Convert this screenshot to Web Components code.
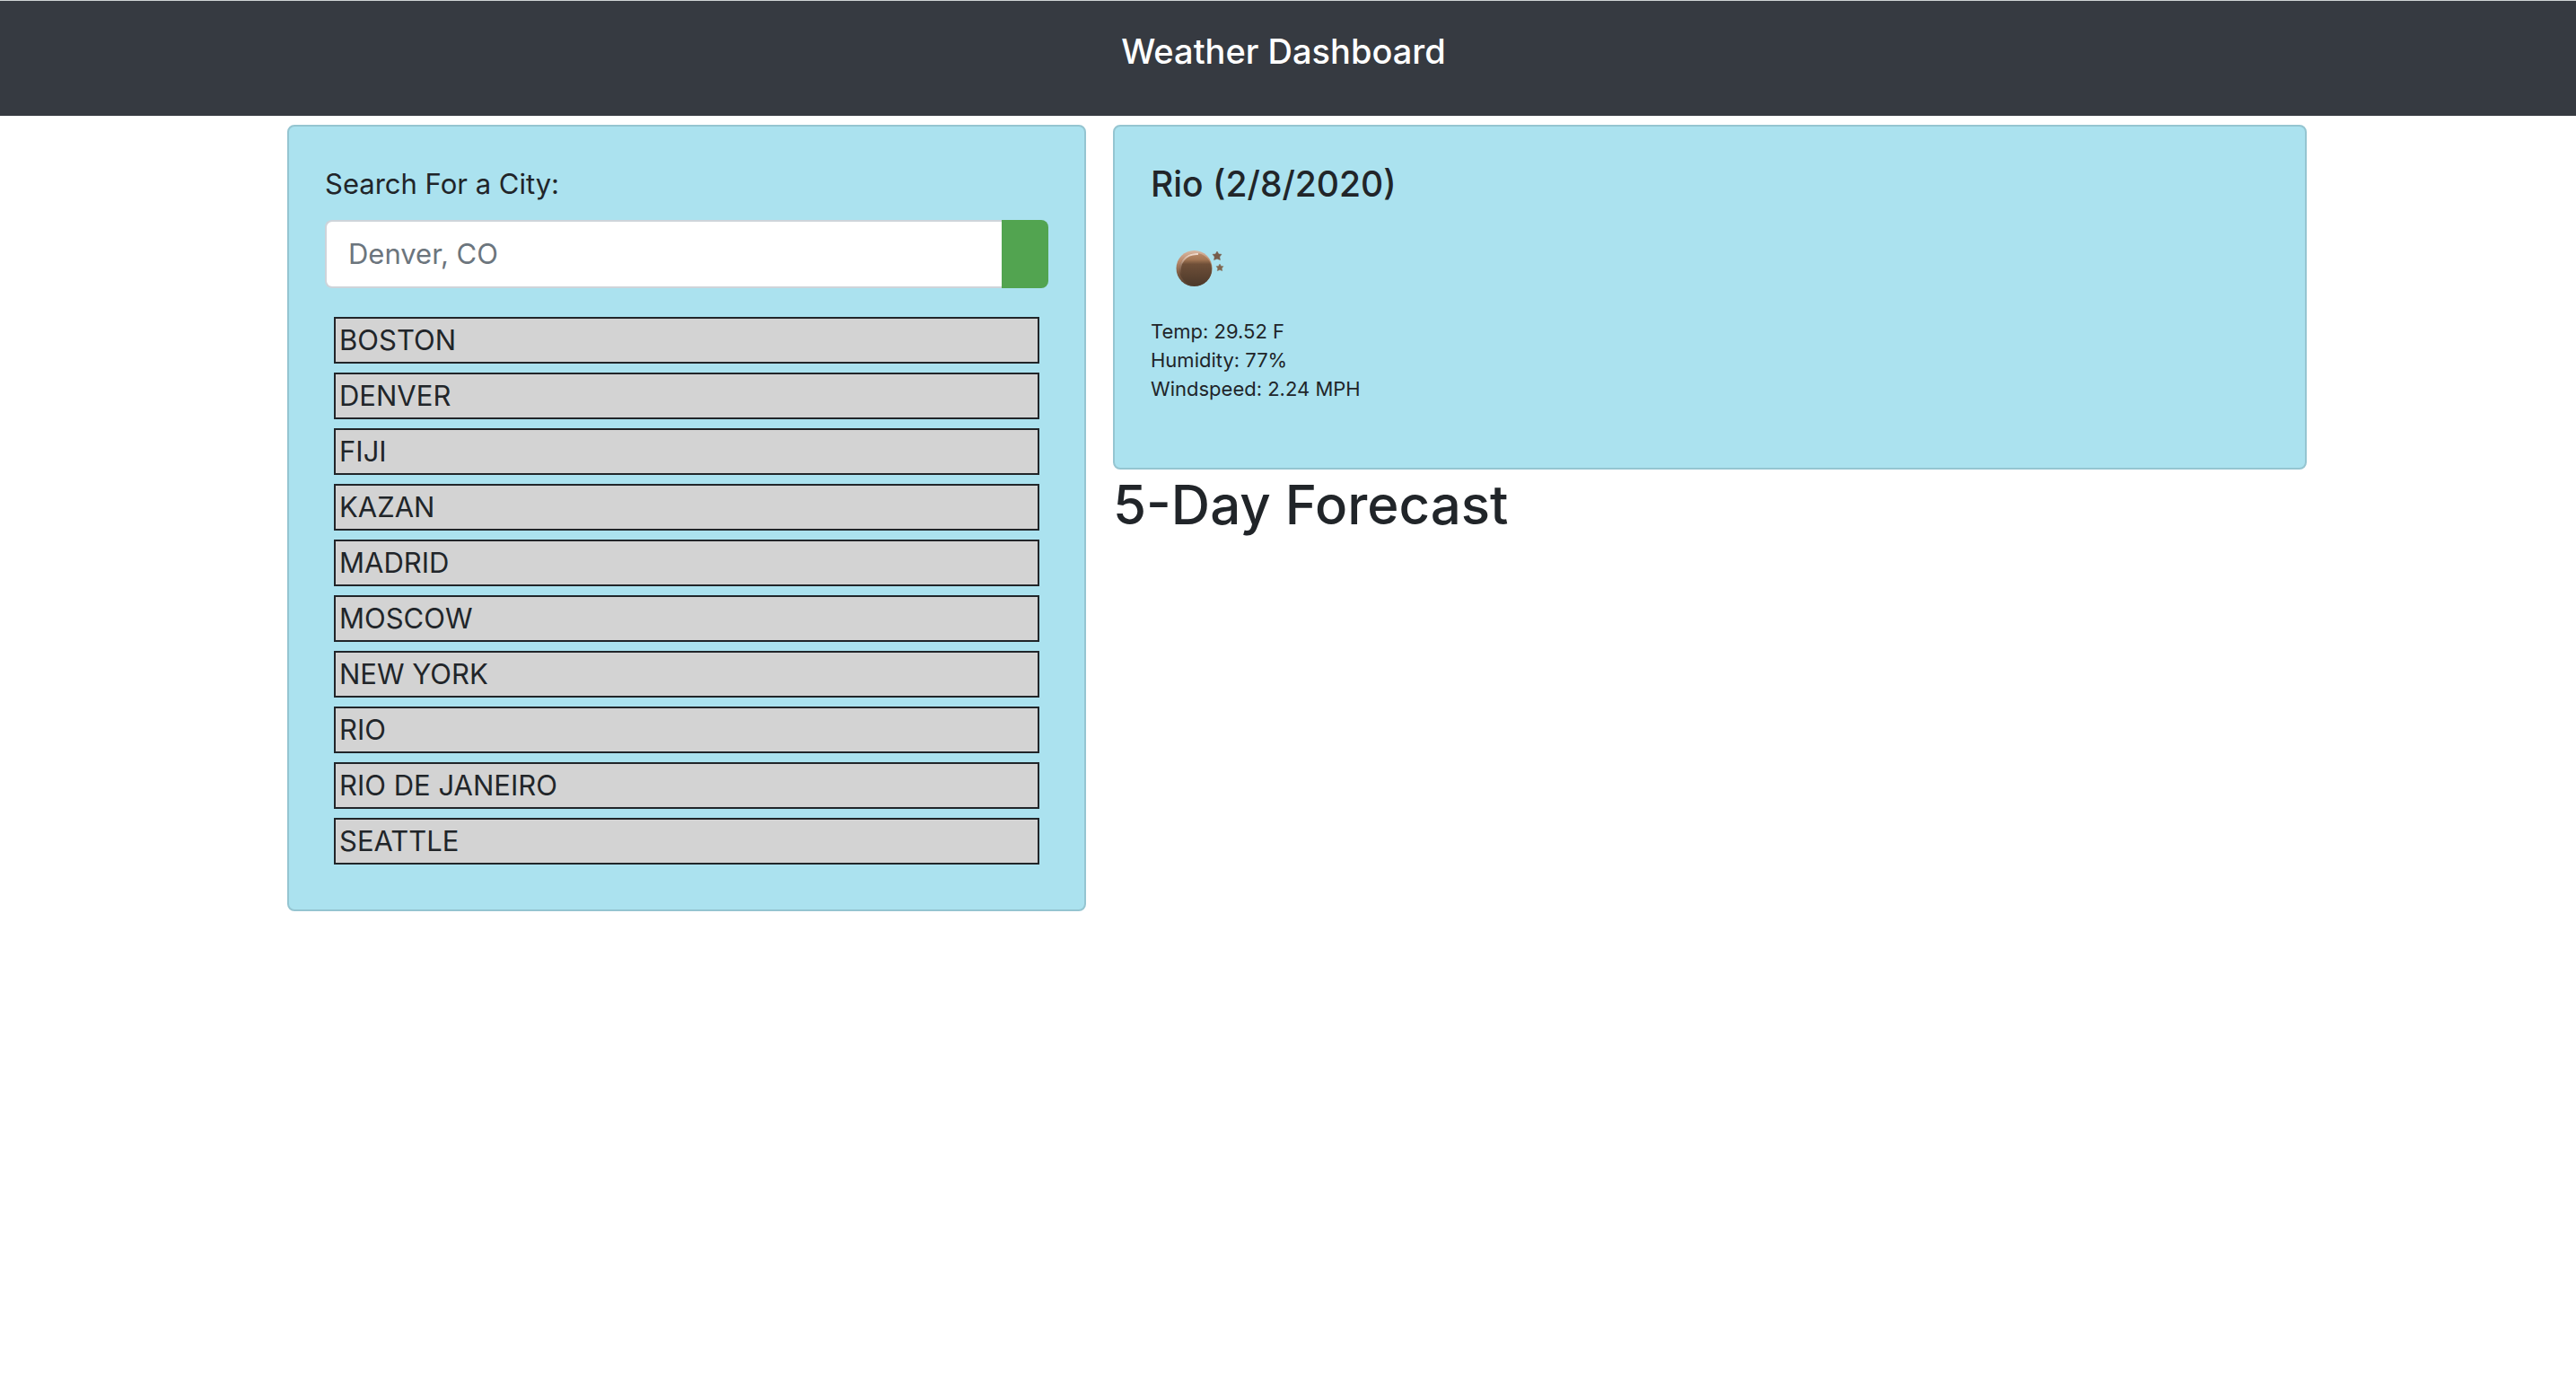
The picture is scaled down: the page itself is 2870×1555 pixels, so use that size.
<!DOCTYPE html>
<html lang="en">
<head>
<meta charset="utf-8">
<title>Weather Dashboard</title>
<style>
  html { --ink: #212529; --card: #abe2ef; --card-line: #95c5d1; --body-size: 31px; --title-size: 38px; --city-size: 39px; --small-size: 22px; }
  body { margin: 0; background: #fff; color: var(--ink); font: 400 var(--body-size)/48px Inter, "Liberation Sans", sans-serif; }
</style>
</head>
<body>
<weather-app></weather-app>
<script>
const shadow = (el, html) => {
  el.attachShadow({ mode: "open" }).innerHTML = "<style>*{box-sizing:border-box}:host{display:block;box-sizing:border-box}</style>" + html;
};

customElements.define("page-header", class extends HTMLElement {
  constructor() {
    super();
    shadow(this, `
      <style>
        :host { background: #363a41; border-top: 1px solid #cfd3d5; color: #fff; padding: 32px 10px 48px 0; text-align: center; }
        h1 { margin: 0; font-size: var(--title-size); font-weight: 500; line-height: 48px; }
      </style>
      <h1><slot></slot></h1>`);
  }
});

customElements.define("info-card", class extends HTMLElement {
  constructor() {
    super();
    shadow(this, `
      <style>
        :host { background: var(--card); border: 2px solid var(--card-line); border-radius: 8px; padding: 40px; }
      </style>
      <slot></slot>`);
  }
});

customElements.define("city-search", class extends HTMLElement {
  constructor() {
    super();
    shadow(this, `
      <style>
        form { margin: 0; }
        label { display: block; margin-bottom: 16px; }
        .group { display: flex; height: 76px; }
        input { flex: 1; min-width: 0; padding: 12px 24px; font: inherit; color: #495057; background: #fff;
          border: 2px solid #ced4da; border-right: 0; border-radius: 8px 0 0 8px; outline: 0; }
        input::placeholder { color: #6c757d; opacity: 1; }
        button { width: 52px; padding: 0; border: 0; border-radius: 0 8px 8px 0; background: #52a450; cursor: pointer; }
      </style>
      <form>
        <label for="city">Search For a City:</label>
        <div class="group"><input id="city" type="text" placeholder="Denver, CO"><button type="button"></button></div>
      </form>`);
  }
});

customElements.define("city-item", class extends HTMLElement {
  constructor() {
    super();
    shadow(this, `
      <style>
        button { display: block; width: 100%; padding: 0 4px; font: inherit; color: inherit; text-align: left;
          background: #d3d3d3; border: 2px solid var(--ink); border-radius: 0; cursor: pointer; }
      </style>
      <button type="button"><slot></slot></button>`);
  }
});

customElements.define("city-list", class extends HTMLElement {
  constructor() {
    super();
    const cities = ["BOSTON", "DENVER", "FIJI", "KAZAN", "MADRID", "MOSCOW", "NEW YORK", "RIO", "RIO DE JANEIRO", "SEATTLE"];
    shadow(this, `
      <style>
        ul { list-style: none; display: flex; flex-direction: column; gap: 10px; margin: 32px 10px 10px; padding: 0; }
      </style>
      <ul>${cities.map(c => `<li><city-item>${c}</city-item></li>`).join("")}</ul>`);
  }
});

customElements.define("night-icon", class extends HTMLElement {
  constructor() {
    super();
    shadow(this, `
      <style>:host { width: 100px; height: 100px; } svg { display: block; }</style>
      <svg width="100" height="100" viewBox="0 0 100 100" aria-hidden="true">
        <defs>
          <linearGradient id="rim" x1="0" y1="0" x2="0" y2="1">
            <stop offset="0" stop-color="#d9b8a2"/><stop offset=".3" stop-color="#b98a6c"/>
            <stop offset=".65" stop-color="#7a5a42"/><stop offset="1" stop-color="#4f3b2c"/>
          </linearGradient>
          <linearGradient id="disc" x1="0" y1="0" x2="0" y2="1">
            <stop offset="0" stop-color="#b98a69"/><stop offset=".2" stop-color="#a37653"/>
            <stop offset=".34" stop-color="#6f4f38"/><stop offset="1" stop-color="#4c392a"/>
          </linearGradient>
          <linearGradient id="shine" x1="0" y1="0" x2="0" y2="1">
            <stop offset="0" stop-color="#efd9cb"/><stop offset="1" stop-color="#b08a72" stop-opacity="0"/>
          </linearGradient>
          <path id="star" d="M0-5 1.8-2 5-1.7 2.8 1 3.4 4.6 0 3.2-3.4 4.6-2.8 1-5-1.7-1.8-2Z" stroke-width="1" stroke-opacity=".5" stroke-linejoin="round"/>
        </defs>
        <circle cx="48.5" cy="46" r="20" fill="url(#rim)"/>
        <circle cx="50" cy="47" r="18" fill="url(#disc)"/>
        <path d="M33.500 53C30.500 41 38.500 29 53 30" fill="none" stroke="url(#shine)" stroke-width="2"/>
        <use href="#star" x="74" y="32" fill="#765c4b" stroke="#765c4b"/>
        <use href="#star" transform="translate(77 45) scale(.8)" fill="#80664f" stroke="#80664f"/>
      </svg>`);
  }
});

customElements.define("current-weather", class extends HTMLElement {
  constructor() {
    super();
    shadow(this, `
      <style>
        h2 { margin: 0 0 24px; font-size: var(--city-size); font-weight: 500; line-height: 48px; }
        p { margin: 0; font-size: var(--small-size); line-height: 32px; }
        .facts { padding-bottom: 32px; }
      </style>
      <h2>Rio (2/8/2020)</h2>
      <night-icon></night-icon>
      <div class="facts"><p>Temp: 29.52 F</p><p>Humidity: 77%</p><p>Windspeed: 2.24 MPH</p></div>`);
  }
});

customElements.define("weather-app", class extends HTMLElement {
  constructor() {
    super();
    shadow(this, `
      <style>
        .frame { padding-right: 10px; }
        main { display: grid; grid-template-columns: 5fr 7fr; align-items: start; max-width: 2280px; margin: 10px auto 0; }
        .side { padding: 0 30px; min-width: 0; }
        .forecast { margin: 0; font-size: 60px; font-weight: 500; line-height: 78px; }
      </style>
      <page-header>Weather Dashboard</page-header>
      <div class="frame">
        <main>
          <div class="side"><info-card><city-search></city-search><city-list></city-list></info-card></div>
          <div>
            <info-card><current-weather></current-weather></info-card>
            <h2 class="forecast">5-Day Forecast</h2>
          </div>
        </main>
      </div>`);
  }
});
</script>
</body>
</html>
